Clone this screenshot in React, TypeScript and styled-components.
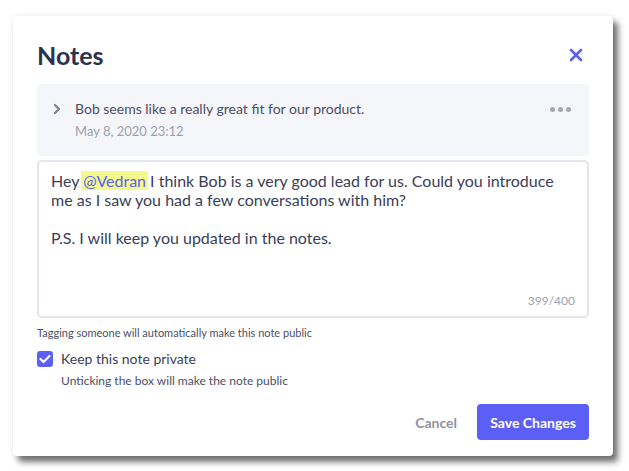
import React from "react";
import styled, { createGlobalStyle } from "styled-components";

const GlobalStyle = createGlobalStyle`
  body {
    margin: 0;
    background: #ffffff;
    font-family: Lato, "Open Sans", sans-serif;
    color: #3b4058;
  }
`;

const Page = styled.div`
  width: 629px;
  height: 471px;
  padding: 16px 0 0 13px;
  box-sizing: border-box;
`;

const Modal = styled.div`
  width: 600px;
  height: 440px;
  box-sizing: border-box;
  background: #ffffff;
  border-radius: 4px;
  box-shadow: 0 0 6px rgba(0, 0, 0, 0.08), 5px 6px 6px rgba(0, 0, 0, 0.55);
  padding: 24px 24px 16px 24px;
  display: flex;
  flex-direction: column;
`;

const Header = styled.div`
  display: flex;
  align-items: center;
  justify-content: space-between;
  height: 30px;
  margin-bottom: 14px;
`;

const Title = styled.h1`
  margin: 0;
  font-size: 25px;
  font-weight: 700;
  color: #2c3150;
`;

const CloseButton = styled.button`
  border: 0;
  background: none;
  padding: 0;
  margin-right: 6px;
  width: 14px;
  height: 14px;
  display: flex;
  cursor: pointer;
`;

const NoteCard = styled.div`
  background: #f5f6fa;
  border-radius: 4px;
  padding: 16px 16px 17px 16px;
  display: flex;
  align-items: flex-start;
  gap: 10px;
`;

const Chevron = styled.div`
  width: 12px;
  height: 18px;
  display: flex;
  align-items: center;
`;

const NoteBody = styled.div`
  flex: 1;
  display: flex;
  flex-direction: column;
  gap: 5px;
`;

const NoteText = styled.div`
  font-size: 14px;
  line-height: 18px;
  color: #4a4f66;
`;

const NoteDate = styled.div`
  font-size: 13px;
  line-height: 16px;
  color: #9c9fad;
`;

const MoreDots = styled.div`
  display: flex;
  gap: 3px;
  padding-top: 7px;
  margin-right: 2px;
`;

const Dot = styled.span`
  width: 5px;
  height: 5px;
  border-radius: 50%;
  background: #a6a8b4;
`;

const Editor = styled.div`
  margin-top: 4px;
  height: 158px;
  box-sizing: border-box;
  border: 2px solid #e3e5ec;
  border-radius: 5px;
  padding: 9px 12px 8px 12px;
  display: flex;
  flex-direction: column;
`;

const EditorText = styled.div`
  flex: 1;
  font-size: 16px;
  line-height: 19px;
  color: #3b4058;
`;

const Paragraph = styled.p`
  margin: 0 0 19px 0;
`;

const Mention = styled.span`
  background: #f4f98c;
  color: #5b5ff5;
  box-shadow: -2px 0 0 #f4f98c, 2px 0 0 #f4f98c;
`;

const Counter = styled.div`
  align-self: flex-end;
  font-size: 12px;
  color: #9c9fad;
`;

const Hint = styled.div`
  margin-top: 8px;
  font-size: 11px;
  color: #4a4f66;
`;

const CheckRow = styled.label`
  margin-top: 11px;
  display: flex;
  align-items: center;
  gap: 8px;
  font-size: 14px;
  color: #3b4058;
`;

const Checkbox = styled.span`
  width: 16px;
  height: 16px;
  border-radius: 3px;
  background: #5b5ff5;
  display: flex;
  align-items: center;
  justify-content: center;
`;

const SubHint = styled.div`
  margin: 6px 0 0 24px;
  font-size: 12px;
  color: #4a4f66;
`;

const Footer = styled.div`
  margin-top: auto;
  display: flex;
  justify-content: flex-end;
  align-items: center;
  gap: 20px;
`;

const TextButton = styled.button`
  border: 0;
  padding: 0;
  background: none;
  font-family: inherit;
  font-size: 14px;
  font-weight: 700;
  color: #8f92a1;
  cursor: pointer;
`;

const PrimaryButton = styled.button`
  border: 0;
  height: 36px;
  padding: 0 10px;
  width: 112px;
  border-radius: 4px;
  background: #5b5ff5;
  color: #ffffff;
  font-family: inherit;
  font-size: 14px;
  font-weight: 700;
  cursor: pointer;
`;

export default function App() {
  return (
    <Page>
      <GlobalStyle />
      <Modal>
        <Header>
          <Title>Notes</Title>
          <CloseButton aria-label="Close">
            <svg width="14" height="14" viewBox="0 0 14 14">
              <path d="M2 2 L12 12 M12 2 L2 12" stroke="#5b5ff5" strokeWidth="2.6" strokeLinecap="round" />
            </svg>
          </CloseButton>
        </Header>
        <NoteCard>
          <Chevron>
            <svg width="8" height="12" viewBox="0 0 8 12">
              <path d="M2 2 L6 6 L2 10" stroke="#7d8090" strokeWidth="2.2" fill="none" strokeLinecap="round" strokeLinejoin="round" />
            </svg>
          </Chevron>
          <NoteBody>
            <NoteText>Bob seems like a really great fit for our product.</NoteText>
            <NoteDate>May 8, 2020 23:12</NoteDate>
          </NoteBody>
          <MoreDots>
            <Dot />
            <Dot />
            <Dot />
          </MoreDots>
        </NoteCard>
        <Editor>
          <EditorText>
            <Paragraph>
              Hey <Mention>@Vedran</Mention> I think Bob is a very good lead for us. Could you introduce me as I saw you had a few conversations with him?
            </Paragraph>
            <Paragraph>P.S. I will keep you updated in the notes.</Paragraph>
          </EditorText>
          <Counter>399/400</Counter>
        </Editor>
        <Hint>Tagging someone will automatically make this note public</Hint>
        <CheckRow>
          <Checkbox>
            <svg width="12" height="10" viewBox="0 0 12 10">
              <path d="M1.5 5 L4.5 8 L10.5 2" stroke="#ffffff" strokeWidth="2.2" fill="none" strokeLinecap="round" strokeLinejoin="round" />
            </svg>
          </Checkbox>
          Keep this note private
        </CheckRow>
        <SubHint>Unticking the box will make the note public</SubHint>
        <Footer>
          <TextButton>Cancel</TextButton>
          <PrimaryButton>Save Changes</PrimaryButton>
        </Footer>
      </Modal>
    </Page>
  );
}
